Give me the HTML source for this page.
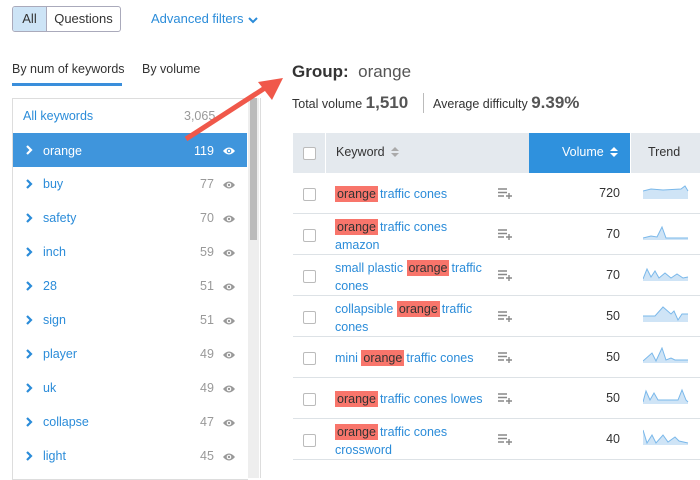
<!DOCTYPE html><html><head><style>
body{margin:0;width:700px;height:470px;overflow:hidden;background:#fff;font-family:"Liberation Sans",sans-serif;color:#333;position:relative}
.a{position:absolute}
.blue{color:#2b8cd9}
.hl{background:#f8756b;color:#333;padding:1px 2px;margin-right:2px}
.cb{position:absolute;width:11px;height:11px;border:1px solid #bbb;border-radius:2px;background:#fff}
</style></head><body>
<div class="a" style="left:12px;top:6px;width:107px;height:24px;border:1px solid #aab;border-radius:3px;overflow:hidden;font-size:13px">
<div class="a" style="left:0;top:0;width:33px;height:24px;background:#cde4f6;border-right:1px solid #aab;text-align:center;line-height:24px">All</div>
<div class="a" style="left:34px;top:0;width:73px;height:24px;text-align:center;line-height:24px">Questions</div></div>
<div class="a blue" style="left:151px;top:11px;font-size:13px">Advanced filters <svg width="12" height="8" style="vertical-align:middle"><path d="M2 2l4 4 4-4" stroke="#2b8cd9" stroke-width="2" fill="none"/></svg></div>
<div class="a" style="left:12px;top:62px;font-size:12.5px">By num of keywords</div>
<div class="a" style="left:12px;top:83px;width:110px;height:3px;background:#3a8edb"></div>
<div class="a" style="left:142px;top:62px;font-size:12.5px">By volume</div>
<div class="a" style="left:12px;top:98px;width:235px;height:380px;border:1px solid #ddd;border-right:none"></div>
<div class="a" style="left:248px;top:98px;width:11px;height:380px;background:#eee"></div>
<div class="a" style="left:250px;top:98px;width:7px;height:142px;background:#bbb"></div>
<div class="a" style="left:260px;top:98px;width:1px;height:380px;background:#ddd"></div>
<div class="a blue" style="left:23px;top:109px;font-size:12.5px">All keywords</div>
<div class="a" style="left:184px;top:109px;font-size:12.5px;color:#999">3,065</div>
<div class="a" style="left:13px;top:133px;width:234px;height:34px;background:#3f95dc"></div>
<div id="list"></div>
<svg class="a" style="left:0;top:0" width="700" height="470"><line x1="186" y1="139" x2="268" y2="86" stroke="#f0584a" stroke-width="5"/><polygon points="283,78 258,82 272,100" fill="#f0584a"/></svg>
<div class="a" style="left:292px;top:62px;font-size:17px;font-weight:bold;color:#333">Group:&nbsp; <span style="font-weight:normal;color:#555">orange</span></div>
<div class="a" style="left:292px;top:93px;font-size:12.5px">Total volume <b style="font-size:17px;color:#555">1,510</b></div>
<div class="a" style="left:423px;top:93px;width:1px;height:20px;background:#bbb"></div>
<div class="a" style="left:433px;top:93px;font-size:12.5px">Average difficulty <b style="font-size:17px;color:#555">9.39%</b></div>
<div class="a" style="left:293px;top:133px;width:407px;height:40px;background:#e4e9ee"></div>
<div class="a" style="left:325px;top:133px;width:1px;height:40px;background:#fff"></div>
<div class="a" style="left:529px;top:133px;width:101px;height:40px;background:#2f91dd"></div>
<div class="a" style="left:630px;top:133px;width:1px;height:40px;background:#fff"></div>
<div class="cb" style="left:303px;top:147px"></div>
<div class="a" style="left:336px;top:145px;font-size:12.5px">Keyword</div>
<svg class="a" style="left:390px;top:145px" width="10" height="14"><path d="M1 6L5 2L9 6Z M1 8L5 12L9 8Z" fill="#aaa"/></svg>
<div class="a" style="left:562px;top:145px;font-size:12.5px;color:#fff">Volume</div>
<svg class="a" style="left:609px;top:145px" width="10" height="14"><path d="M1 6L5 2L9 6Z M1 8L5 12L9 8Z" fill="#fff"/></svg>
<div class="a" style="left:648px;top:145px;font-size:12.5px">Trend</div>
<div id="rows"></div>
<script>
var it=[["buy",77],["safety",70],["inch",59],["28",51],["sign",51],["player",49],["uk",49],["collapse",47],["light",45]];
function chev(y,c){return '<svg class="a" style="left:24px;top:'+y+'px" width="10" height="12"><path d="M3 2L7 6L3 10" stroke="'+c+'" stroke-width="2.2" fill="none"/></svg>';}
function eye(y,c){return '<svg class="a" style="left:222px;top:'+y+'px" width="14" height="10"><path d="M1 5Q7 -2 13 5Q7 12 1 5Z" fill="'+c+'"/><circle cx="7" cy="5" r="2.3" fill="'+(c=='#fff'?'#3f95dc':'#fff')+'"/><circle cx="7" cy="5" r="1.2" fill="'+c+'"/></svg>';}
var h=chev(144,'#fff')+'<div class="a" style="left:43px;top:144px;color:#fff;font-size:12.5px">orange</div><div class="a" style="left:194px;top:144px;color:#fff;font-size:12.5px">119</div>'+eye(146,'#fff');
it.forEach(function(e,i){var y=177+i*34;h+=chev(y+1,'#2b8cd9')+'<div class="a blue" style="left:43px;top:'+y+'px;font-size:12.5px">'+e[0]+'</div><div class="a" style="left:200px;top:'+y+'px;color:#999;font-size:12.5px">'+e[1]+'</div>'+eye(y+3,'#999');});
document.getElementById('list').innerHTML=h;
var H='<span class="hl">orange</span>';
var r=[[H+'traffic cones',720,'M0 8 L8 6 L20 7 L38 6 L42 3 L45 8'],[H+'traffic cones<br>amazon',70,'M0 14 L8 12 L14 13 L19 3 L23 14 L45 14'],['small plastic '+H+'traffic<br>cones',70,'M0 14 L4 4 L8 12 L12 6 L16 13 L22 8 L28 13 L34 9 L40 13 L45 12'],['collapsible '+H+'traffic<br>cones',50,'M0 10 L12 10 L20 1 L28 8 L31 5 L35 14 L39 8 L45 8'],['mini '+H+'traffic cones',50,'M0 14 L9 6 L13 14 L19 1 L23 13 L28 11 L32 13 L45 13'],[H+'traffic cones lowes',50,'M0 14 L3 3 L7 12 L11 5 L15 12 L35 12 L39 2 L43 12 L45 14'],[H+'traffic cones<br>crossword',40,'M0 1 L4 14 L9 6 L13 14 L20 6 L25 13 L32 8 L36 12 L45 14']];
var R='';r.forEach(function(e,i){var y=173+i*41;var two=e[0].indexOf('<br>')>0;
R+='<div class="a" style="left:293px;top:'+(y+40)+'px;width:407px;height:1px;background:#dde2e6"></div><div class="cb" style="left:303px;top:'+(y+15)+'px"></div><div class="a blue" style="left:335px;top:'+(y+(two?4:12))+'px;font-size:12.5px;line-height:18px">'+e[0]+'</div><svg class="a" style="left:498px;top:'+(y+15)+'px" width="14" height="11"><path d="M0 1H9M0 4.5H9M0 8H6M8 8H14M11 5V11" stroke="#888" stroke-width="1.4"/></svg><div class="a" style="left:580px;top:'+(y+13)+'px;width:40px;text-align:right;font-size:12.5px">'+e[1]+'</div><svg class="a" style="left:643px;top:'+(y+10)+'px" width="46" height="17"><path d="'+e[2]+' L45 16 L0 16Z" fill="#cfe4f6"/><path d="'+e[2]+'" stroke="#7ab8ea" fill="none"/></svg>';});
document.getElementById('rows').innerHTML=R;
</script>
</body></html>
